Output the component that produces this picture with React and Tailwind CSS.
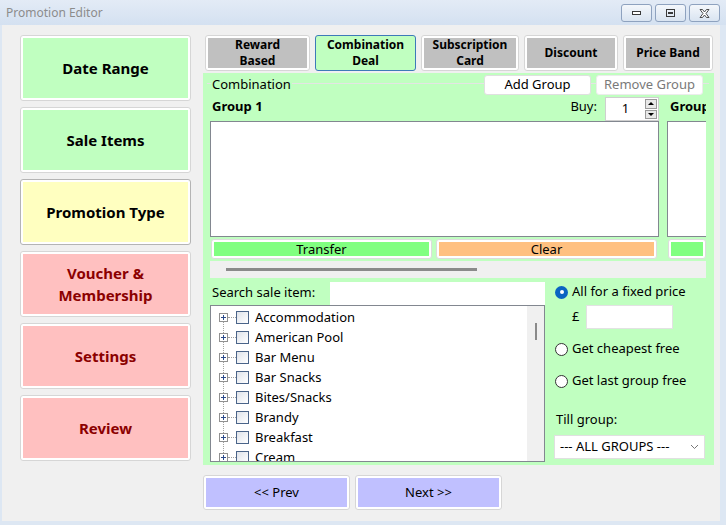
import { useState } from 'react';

/* ── Small drawn controls ── */
const WinButton = ({ children }) => (
  <div className="w-[31px] h-[18px] rounded-[3px] border border-[#8ea2bf] bg-gradient-to-b from-[#f4f7fb] to-[#d9e4f1] flex items-center justify-center">
    {children}
  </div>
);

const Checkbox = () => (
  <div className="w-[13px] h-[13px] border border-[#4a6489] bg-gradient-to-br from-[#dfe3ea] to-[#ffffff]" />
);

const Radio = ({ checked }) =>
  checked ? (
    <div className="w-[13px] h-[13px] rounded-full bg-[#0a64c2] flex items-center justify-center">
      <div className="w-[4px] h-[4px] rounded-full bg-white" />
    </div>
  ) : (
    <div className="w-[13px] h-[13px] rounded-full border border-[#333] bg-white" />
  );

function NavTile({ label, tone, current }) {
  const fill = {
    green: 'bg-[#c0ffc0] text-black',
    yellow: 'bg-[#ffffc0] text-black',
    red: 'bg-[#ffc0c0] text-[#8b0000]',
  }[tone];
  return (
    <div className={`h-[66px] rounded-[3px] border ${current ? 'border-[#b4b4b4]' : 'border-[#d6d6d6]'} bg-white p-[2px]`}>
      <div className={`h-full flex items-center justify-center text-center font-bold text-[15px] leading-[22px] ${fill}`}>
        {label}
      </div>
    </div>
  );
}

function Tab({ label, width, selected }) {
  return selected ? (
    <div className={`${width} h-full rounded-[3px] border border-[#3d7ab8] bg-[#c0ffc0] flex items-center justify-center text-center font-bold text-[12px] leading-[16px]`}>
      {label}
    </div>
  ) : (
    <div className={`${width} h-full rounded-[3px] border border-[#d6d6d6] bg-white p-[2px]`}>
      <div className="h-full bg-[#c0c0c0] flex items-center justify-center text-center font-bold text-[12px] leading-[16px]">
        {label}
      </div>
    </div>
  );
}

function ActionButton({ label, color, width }) {
  return (
    <div className={`${width} h-[20px] rounded-[3px] border border-[#dcdcdc] bg-white p-[2px]`}>
      <div className={`h-full ${color} flex items-center justify-center text-[13px] leading-none`}>{label}</div>
    </div>
  );
}

const TREE = ['Accommodation', 'American Pool', 'Bar Menu', 'Bar Snacks', 'Bites/Snacks', 'Brandy', 'Breakfast', 'Cream'];

export default function App() {
  const [price, setPrice] = useState('');

  return (
    <div className="w-[726px] h-[525px] overflow-hidden bg-[#dde7f3] flex flex-col font-['Noto_Sans',sans-serif] text-black">
      {/* ── Title bar ── */}
      <div className="h-[25px] flex items-center justify-between pl-[6px] pr-[6px] bg-gradient-to-b from-[#e3ebf6] to-[#d4e1f1]">
        <span className="text-[12px] text-[#8c8c8c]">Promotion Editor</span>
        <div className="flex gap-[3px] pt-[1px]">
          <WinButton>
            <div className="w-[9px] h-[4px] border border-[#3a3a3a] bg-white" />
          </WinButton>
          <WinButton>
            <div className="w-[9px] h-[8px] border border-[#3a3a3a] flex items-center justify-center">
              <div className="w-[5px] h-[2px] border border-[#3a3a3a]" />
            </div>
          </WinButton>
          <WinButton>
            <svg width="11" height="9" viewBox="0 0 11 9">
              <path d="M1 0.5 L3.5 0.5 L5.5 3 L7.5 0.5 L10 0.5 L7 4.5 L10 8.5 L7.5 8.5 L5.5 6 L3.5 8.5 L1 8.5 L4 4.5 Z" fill="white" stroke="#3a3a3a" strokeWidth="0.9" />
            </svg>
          </WinButton>
        </div>
      </div>

      {/* ── Body ── */}
      <div className="flex-1 ml-[2px] mr-[6px] mb-[4px] bg-[#f0f0f0] flex pl-[18px] pt-[10px] gap-[12px]">
        {/* Left steps */}
        <div className="w-[171px] flex flex-col gap-[6px]">
          <NavTile label="Date Range" tone="green" />
          <NavTile label="Sale Items" tone="green" />
          <NavTile label="Promotion Type" tone="yellow" current />
          <NavTile label={<>Voucher &amp;<br />Membership</>} tone="red" />
          <NavTile label="Settings" tone="red" />
          <NavTile label="Review" tone="red" />
        </div>

        {/* Right content */}
        <div className="w-[511px] flex flex-col">
          <div className="h-[36px] flex gap-[5px] pl-[2px]">
            <Tab label={<>Reward<br />Based</>} width="w-[105px]" />
            <Tab label={<>Combination<br />Deal</>} width="w-[101px]" selected />
            <Tab label={<>Subscription<br />Card</>} width="w-[98px]" />
            <Tab label="Discount" width="w-[94px]" />
            <Tab label="Price Band" width="w-[90px]" />
          </div>

          {/* Green panel */}
          <div className="mt-[2px] h-[392px] bg-[#c0ffc0] pl-[7px] pr-[8px] pt-[2px] flex flex-col">
            {/* Group box header */}
            <div className="relative h-[22px] flex items-start">
              <div className="absolute left-[-3px] right-[-3px] top-[8px] h-px bg-[#e4e4e4]" />
              <span className="relative ml-[1px] px-[1px] bg-[#c0ffc0] text-[13px] leading-[16px] mt-[1px]">Combination</span>
              <div className="relative ml-auto mr-[3px] flex gap-[5px]">
                <div className="w-[107px] h-[20px] rounded-[3px] border border-[#e0e0e0] bg-white flex items-center justify-center text-[13px]">Add Group</div>
                <div className="w-[107px] h-[20px] rounded-[3px] border border-[#ececec] bg-white flex items-center justify-center text-[13px] text-[#7a7a7a]">Remove Group</div>
              </div>
            </div>

            {/* Groups (horizontal scroll) */}
            <div className="h-[162px] overflow-hidden flex gap-[8px]">
              <div className="w-[449px] shrink-0 flex flex-col">
                <div className="h-[24px] flex items-start">
                  <span className="font-bold text-[13px] leading-[18px] ml-[2px]">Group 1</span>
                  <span className="ml-auto text-[13px] leading-[18px] mr-[8px]">Buy:</span>
                  <div className="w-[54px] h-[24px] border border-[#cfcfcf] bg-white flex">
                    <div className="flex-1 flex items-center justify-center text-[13px]">1</div>
                    <div className="w-[13px] flex flex-col gap-px py-px pr-px">
                      <div className="flex-1 border border-[#9a9a9a] bg-[#e8e8e8] flex items-center justify-center">
                        <div className="w-0 h-0 border-l-[3px] border-r-[3px] border-b-[3px] border-l-transparent border-r-transparent border-b-black" />
                      </div>
                      <div className="flex-1 border border-[#9a9a9a] bg-[#e8e8e8] flex items-center justify-center">
                        <div className="w-0 h-0 border-l-[3px] border-r-[3px] border-t-[3px] border-l-transparent border-r-transparent border-t-black" />
                      </div>
                    </div>
                  </div>
                </div>
                <div className="h-[116px] border border-[#828790] bg-white" />
                <div className="mt-[2px] flex gap-[4px] pl-[1px]">
                  <ActionButton label="Transfer" color="bg-[#80ff80]" width="w-[221px]" />
                  <ActionButton label="Clear" color="bg-[#ffc080]" width="w-[221px]" />
                </div>
              </div>
              <div className="w-[39px] shrink-0 flex flex-col overflow-hidden">
                <div className="h-[24px] flex items-start">
                  <span className="font-bold text-[13px] leading-[18px] ml-[3px] whitespace-nowrap">Group</span>
                </div>
                <div className="w-[60px] h-[116px] border border-[#828790] bg-white" />
                <div className="mt-[2px] flex pl-[1px]">
                  <ActionButton label="" color="bg-[#80ff80]" width="w-[150px]" />
                </div>
              </div>
            </div>
            <div className="h-[17px] mt-[2px] bg-[#f0f0f0] flex items-center pl-[16px]">
              <div className="w-[251px] h-[3px] bg-[#8a8a8a]" />
            </div>

            {/* Search + options */}
            <div className="mt-[3px] flex gap-[9px] flex-1">
              <div className="w-[335px] flex flex-col">
                <div className="h-[24px] flex items-center">
                  <span className="text-[13px] ml-[2px] w-[118px]">Search sale item:</span>
                  <div className="flex-1 h-[23px] bg-white" />
                </div>
                <div className="h-[157px] border border-[#828790] bg-white flex overflow-hidden">
                  <div className="flex-1 pl-[8px] pt-[1px] relative">
                    <div className="absolute left-[12px] top-[10px] bottom-0 border-l border-dotted border-[#a0a0a0]" />
                    {TREE.map((t) => (
                      <div key={t} className="h-[20px] flex items-center relative">
                        <div className="w-[9px] h-[9px] border border-[#919191] bg-white flex items-center justify-center relative">
                          <div className="absolute w-[5px] h-px bg-[#2c4a8a]" />
                          <div className="absolute w-px h-[5px] bg-[#2c4a8a]" />
                        </div>
                        <div className="w-[8px] border-t border-dotted border-[#a0a0a0]" />
                        <Checkbox />
                        <span className="ml-[6px] text-[13px] leading-none">{t}</span>
                      </div>
                    ))}
                  </div>
                  <div className="w-[17px] bg-[#f0f0f0] flex justify-center pt-[17px]">
                    <div className="w-[2px] h-[17px] bg-[#8a8a8a]" />
                  </div>
                </div>
              </div>

              <div className="flex-1 flex flex-col pt-[2px]">
                <label className="h-[18px] flex items-center gap-[4px] ml-[1px]">
                  <Radio checked />
                  <span className="text-[13px]">All for a fixed price</span>
                </label>
                <div className="mt-[4px] flex items-center">
                  <span className="text-[13px] ml-[18px] w-[14px]">£</span>
                  <input
                    value={price}
                    onChange={(e) => setPrice(e.target.value)}
                    className="w-[87px] h-[24px] bg-white border border-[#e2e2e2] outline-none px-1 text-[13px]"
                  />
                </div>
                <label className="mt-[11px] h-[18px] flex items-center gap-[4px] ml-[1px]">
                  <Radio />
                  <span className="text-[13px]">Get cheapest free</span>
                </label>
                <label className="mt-[14px] h-[18px] flex items-center gap-[4px] ml-[1px]">
                  <Radio />
                  <span className="text-[13px]">Get last group free</span>
                </label>
                <span className="mt-[20px] text-[13px] ml-[2px] leading-[18px]">Till group:</span>
                <div className="mt-[7px] w-[151px] h-[24px] bg-white border border-[#e0e0e0] flex items-center px-[5px]">
                  <span className="text-[13px]">--- ALL GROUPS ---</span>
                  <svg className="ml-auto" width="9" height="6" viewBox="0 0 9 6">
                    <path d="M1 1 L4.5 4.5 L8 1" fill="none" stroke="#777" strokeWidth="1" />
                  </svg>
                </div>
              </div>
            </div>
          </div>

          {/* Prev / Next */}
          <div className="mt-[10px] h-[35px] flex gap-[5px]">
            {['<< Prev', 'Next >>'].map((l) => (
              <div key={l} className="w-[147px] h-full rounded-[3px] border border-[#d6d6d6] bg-white p-[2px]">
                <div className="h-full bg-[#c0c0ff] flex items-center justify-center text-[13px]">{l}</div>
              </div>
            ))}
          </div>
        </div>
      </div>
    </div>
  );
}
